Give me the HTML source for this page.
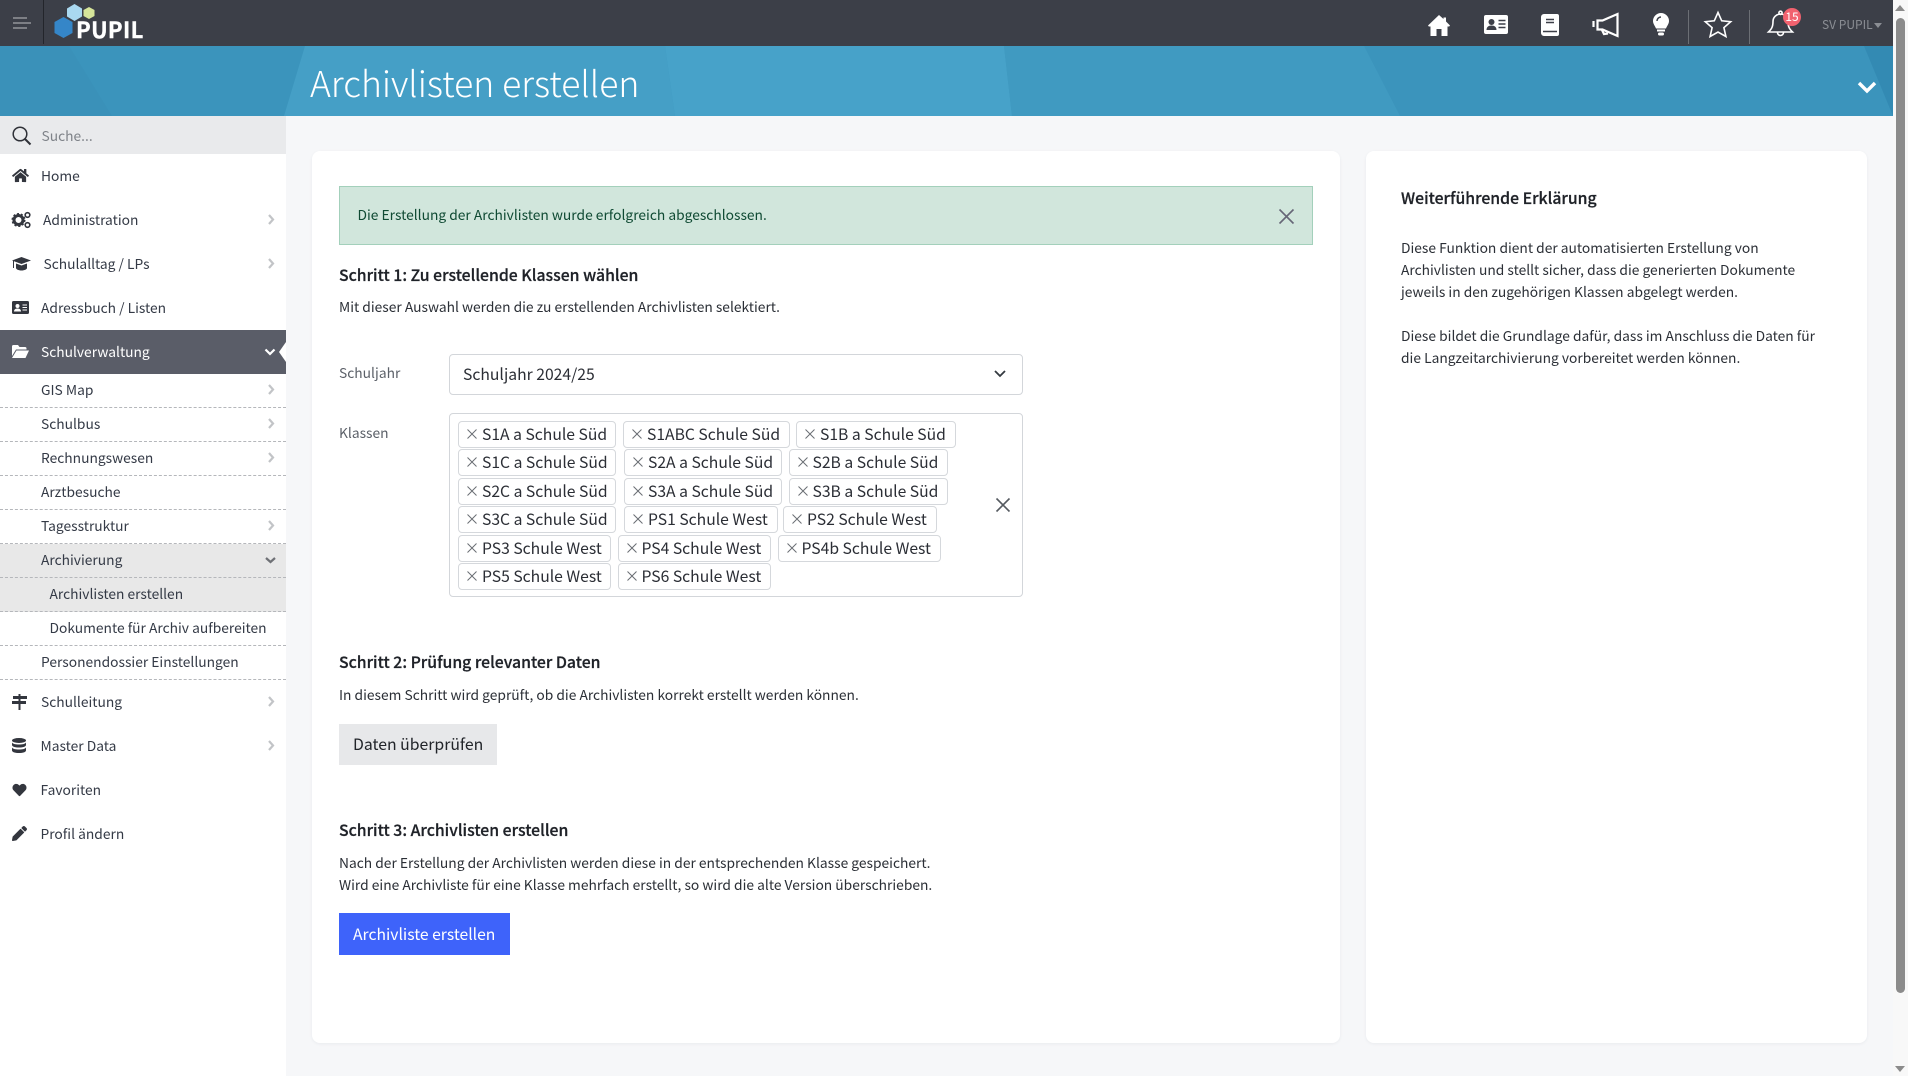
<!DOCTYPE html>
<html lang="de"><head><meta charset="utf-8"><title>Archivlisten erstellen</title>
<style>
html,body{margin:0;padding:0;width:1908px;height:1076px;overflow:hidden;background:#f6f7f9}
body{position:relative;font-family:"Noto Sans CJK JP","Liberation Sans",sans-serif;color:#2b2e35}
.a,.t,.b{position:absolute}
.t{white-space:nowrap;line-height:24px;height:24px}
svg{position:absolute;overflow:visible}
.n{font-size:13.8px;color:#343a46;margin-top:-1px}
.p{font-size:13.8px;color:#2b2f36;margin-top:-1px}
.h{font-size:15.8px;font-weight:500;color:#1f2228;-webkit-text-stroke:.25px #1f2228}
.tag{position:absolute;height:25px;border:1px solid #d5d8dc;border-radius:4px;background:#fff;box-sizing:content-box}
.tag span{position:absolute;left:23px;top:-1px;line-height:25px;font-size:15.7px;color:#2b2e35;white-space:nowrap}
.tag svg{left:8px;top:7px}
.dash{position:absolute;left:0;width:286px;height:0;border-top:1px dashed #b5b7bb}
.ch{position:absolute;left:267px}
</style></head><body>

<!-- top bar -->
<div class="a" style="left:0;top:0;width:1893px;height:46px;background:#3c3f48"></div>
<div class="a" style="left:43px;top:0;width:1px;height:44px;background:#23252b"></div>
<div class="a" style="left:13px;top:17px;width:14px;height:2px;background:#7d7f85"></div>
<div class="a" style="left:13px;top:22px;width:18px;height:2px;background:#7d7f85"></div>
<div class="a" style="left:13px;top:27px;width:14px;height:2px;background:#7d7f85"></div>
<svg style="left:54px;top:3px" width="44" height="36" viewBox="0 0 44 36"><polygon points="20.5,1 28,5.5 28,13.5 20.5,18 13,13.5 13,5.5" fill="#a9d8f0"/><polygon points="35,4 40.500,7 40.500,13 35,16 29.500,13 29.500,7" fill="#d6e59a"/><polygon points="9.500,14 18.500,19 18.500,30 9.500,35 0.500,30 0.500,19" fill="#3586c8"/></svg>
<div class="t" style="left:76px;top:17px;font-size:22px;font-weight:700;color:#fff;letter-spacing:.4px;line-height:24px;-webkit-text-stroke:.4px #fff">PUPIL</div>

<!-- top icons -->
<svg style="left:1428px;top:15px" width="22" height="21" viewBox="0 0 22 21" fill="#fff"><path d="M11 0l4.500 4V2.500h2.500v4L22 10.500l-.8 1H19.500V21H13.500v-7h-5v7H2.500V11.500H.8l-.8-1z"/></svg>
<svg style="left:1484px;top:15px" width="24" height="19" viewBox="0 0 24 19"><rect width="24" height="19" rx="2" fill="#fff"/><circle cx="7.500" cy="7" r="3" fill="#3c3f48"/><path d="M2.500 15c0-3 2-4.500 5-4.500s5 1.500 5 4.500z" fill="#3c3f48"/><path d="M14.500 5.500h7M14.500 9h7M14.500 12.500h7" stroke="#3c3f48" stroke-width="1.500"/></svg>
<svg style="left:1541px;top:14px" width="18" height="22" viewBox="0 0 18 22"><path d="M3 0h13a2 2 0 0 1 2 2v18a2 2 0 0 1-2 2H3a3 3 0 0 1-3-3V3a3 3 0 0 1 3-3z" fill="#fff"/><path d="M5 5.500h8M5 8.500h8M2 17.500h14" stroke="#3c3f48" stroke-width="1.600"/></svg>
<svg style="left:1592px;top:12px" width="28" height="26" viewBox="0 0 28 26" fill="none" stroke="#fff" stroke-width="2.200"><path d="M1.500 9v6"/><path d="M5.500 8.500h5L25.500 2v22L10.500 17.500h-5z"/><path d="M10 18l2 4 4-.5"/></svg>
<svg style="left:1653px;top:13px" width="16" height="23" viewBox="0 0 16 23"><path d="M8 0a8 8 0 0 1 8 8c0 3-2.200 5-3 7.500H3C2.200 13 0 11 0 8a8 8 0 0 1 8-8z" fill="#fff"/><path d="M4 8a4 4 0 0 1 4-4" stroke="#3c3f48" stroke-width="1.500" fill="none"/><rect x="4" y="16.500" width="8" height="2" fill="#fff"/><rect x="5" y="19.500" width="6" height="3" rx="1.500" fill="#fff"/></svg>
<div class="a" style="left:1688px;top:10px;width:1px;height:34px;background:#6c6f75"></div>
<svg style="left:1704px;top:11px" width="28" height="27" viewBox="0 0 28 27" fill="none" stroke="#fff" stroke-width="1.600"><path d="M14 1.500l3.700 8.300 9 .9-6.800 6 2 8.800L14 21l-7.900 4.500 2-8.800-6.800-6 9-.9z"/></svg>
<div class="a" style="left:1749px;top:10px;width:1px;height:34px;background:#6c6f75"></div>
<svg style="left:1767px;top:10px" width="27" height="27" viewBox="0 0 27 27" fill="none" stroke="#fff" stroke-width="1.600"><path d="M13.500 4a7.500 7.500 0 0 0-7.500 7.500c0 6-2 8-4.500 10.500h24c-2.500-2.500-4.500-4.500-4.500-10.500A7.500 7.500 0 0 0 13.500 4z"/><circle cx="13.500" cy="2.800" r="1.600"/><path d="M10.500 22.500a3 3 0 0 0 6 0"/></svg>
<div class="a" style="left:1783px;top:8px;width:18px;height:18px;border-radius:50%;background:#f1626f"></div>
<div class="t" style="left:1783px;top:5px;width:18px;text-align:center;font-size:12px;color:#fff">15</div>
<div class="t" style="left:1822px;top:13px;font-size:12px;color:#8b8e94">SV PUPIL</div>
<div class="a" style="left:1874px;top:23px;width:0;height:0;border:4px solid transparent;border-top:5px solid #8b8e94"></div>

<!-- banner -->
<svg style="left:0;top:46px" width="1893" height="70" viewBox="0 0 1893 70" preserveAspectRatio="none">
<rect width="1893" height="70" fill="#3b94bc"/>
<polygon points="0,0 69,0 112,70 0,70" fill="#3a91b9"/>
<polygon points="305,0 665,0 675,70 284,70" fill="#459fc6"/>
<polygon points="665,0 1004,0 1012,70 675,70" fill="#47a2c9"/>
<polygon points="1004,0 1364,0 1400,70 1012,70" fill="#409ac1"/>
<polygon points="1864,0 1893,0 1893,70" fill="#338ab3"/>
</svg>
<div class="t" style="left:310px;top:56px;height:54px;line-height:54px;font-size:35.5px;font-weight:300;color:#fff">Archivlisten erstellen</div>
<svg style="left:1857px;top:81px" width="20" height="13" viewBox="0 0 20 13" fill="none" stroke="#fff" stroke-width="3.400"><path d="M2 2l8 8 8-8"/></svg>

<!-- sidebar -->
<div class="a" style="left:0;top:116px;width:286px;height:960px;background:#fff"></div>
<div class="a" style="left:0;top:116px;width:286px;height:38px;background:#e9eaec"></div>
<svg style="left:12px;top:126px" width="20" height="20" viewBox="0 0 20 20" fill="none" stroke="#2f3138" stroke-width="1.500"><circle cx="8" cy="8" r="6.800"/><path d="M13 13l5.500 5.500" stroke-width="2"/></svg>
<div class="t" style="left:41.500px;top:123px;font-size:13.8px;color:#7f8389">Suche...</div>

<svg style="left:12px;top:168px" width="17" height="15" viewBox="0 0 576 512" fill="#33363e"><path d="M280.370 148.260L96 300.110V464a16 16 0 0 0 16 16l112.060-.29a16 16 0 0 0 15.920-16V368a16 16 0 0 1 16-16h64a16 16 0 0 1 16 16v95.640a16 16 0 0 0 16 16.050L464 480a16 16 0 0 0 16-16V300L295.670 148.260a12.190 12.190 0 0 0-15.300 0zM571.600 251.470L488 182.560V44.050a12 12 0 0 0-12-12h-56a12 12 0 0 0-12 12v72.610L318.470 43a48 48 0 0 0-61 0L4.340 251.470a12 12 0 0 0-1.600 16.900l25.500 31A12 12 0 0 0 45.150 301l235.220-193.740a12.190 12.190 0 0 1 15.300 0L530.900 301a12 12 0 0 0 16.900-1.600l25.500-31a12 12 0 0 0-1.700-16.930z"/></svg>
<div class="t n" style="left:41px;top:164px">Home</div>

<svg style="left:12px;top:212px" width="19" height="16" viewBox="0 0 19 16"><circle cx="6.500" cy="8" r="4.500" fill="none" stroke="#33363e" stroke-width="3"/><circle cx="6.500" cy="8" r="6" fill="none" stroke="#33363e" stroke-width="2" stroke-dasharray="2 1.800"/><circle cx="15.500" cy="3" r="2.300" fill="none" stroke="#33363e" stroke-width="1.600"/><circle cx="15.500" cy="13" r="2.300" fill="none" stroke="#33363e" stroke-width="1.600"/></svg>
<div class="t n" style="left:43px;top:208px">Administration</div>

<svg style="left:12px;top:257px" width="19" height="14" viewBox="0 0 19 14" fill="#33363e"><path d="M9.500 0L19 3.500 9.500 7 0 3.500z"/><path d="M4 6.500l5.500 2 5.500-2V11c0 1.200-2.500 2.500-5.500 2.500S4 12.200 4 11z"/><rect x="1" y="4" width="1" height="7"/></svg>
<div class="t n" style="left:43.500px;top:252px">Schulalltag / LPs</div>

<svg style="left:12px;top:301px" width="17" height="13" viewBox="0 0 17 13"><rect width="17" height="13" rx="1.500" fill="#33363e"/><circle cx="5.500" cy="5" r="2" fill="#fff"/><path d="M2 10.500c0-2 1.500-3 3.500-3s3.500 1 3.500 3z" fill="#fff"/><path d="M10.500 4h4.500M10.500 6.500h4.500M10.500 9h4.500" stroke="#fff" stroke-width="1"/></svg>
<div class="t n" style="left:41px;top:296px">Adressbuch / Listen</div>

<div class="a" style="left:0;top:330px;width:286px;height:44px;background:#5a5d68"></div>
<svg style="left:12px;top:345px" width="17" height="13" viewBox="0 0 17 13" fill="#fff"><path d="M0 1.500A1.500 1.500 0 0 1 1.500 0H6l1.500 2H13a1.500 1.500 0 0 1 1.500 1.500V4.500H4L0 11z"/><path d="M4.500 5.500H17L13.500 13H0z"/></svg>
<div class="t n" style="left:41px;top:340px;color:#fff">Schulverwaltung</div>
<svg style="left:264px;top:348px" width="12" height="8" viewBox="0 0 12 8" fill="none" stroke="#fff" stroke-width="2.200"><path d="M1.500 1.500L6 6l4.500-4.500"/></svg>
<svg style="left:279px;top:342px" width="7" height="20" viewBox="0 0 7 20"><polygon points="7,0 0,10 7,20" fill="#fff"/></svg>

<div class="a" style="left:0;top:544px;width:286px;height:68px;background:#e8e8e8"></div>
<div class="dash" style="top:407px"></div><div class="dash" style="top:441px"></div><div class="dash" style="top:475px"></div><div class="dash" style="top:509px"></div><div class="dash" style="top:543px"></div><div class="dash" style="top:577px"></div><div class="dash" style="top:611px"></div><div class="dash" style="top:645px"></div><div class="dash" style="top:679px"></div>
<div class="t n" style="left:41px;top:378px">GIS Map</div>
<div class="t n" style="left:41px;top:412px">Schulbus</div>
<div class="t n" style="left:41px;top:446px">Rechnungswesen</div>
<div class="t n" style="left:41px;top:480px">Arztbesuche</div>
<div class="t n" style="left:41px;top:514px">Tagesstruktur</div>
<div class="t n" style="left:41px;top:548px">Archivierung</div>
<div class="t n" style="left:49.500px;top:582px">Archivlisten erstellen</div>
<div class="t n" style="left:49.500px;top:616px">Dokumente für Archiv aufbereiten</div>
<div class="t n" style="left:41px;top:650px">Personendossier Einstellungen</div>

<svg style="left:12px;top:694px" width="15" height="16" viewBox="0 0 15 16" fill="#33363e"><rect x="6.500" y="0" width="2" height="16"/><polygon points="1,2 15,2 15,5 1,5"/><polygon points="0,7 14,7 14,10 0,10"/></svg>
<div class="t n" style="left:41px;top:690px">Schulleitung</div>
<svg style="left:12px;top:738px" width="14" height="15" viewBox="0 0 14 15" fill="#33363e"><ellipse cx="7" cy="2.500" rx="7" ry="2.500"/><path d="M0 4.500c1 1.500 3.500 2 7 2s6-.5 7-2V7c0 1.500-3 2.500-7 2.500S0 8.500 0 7z"/><path d="M0 9.500c1 1.500 3.500 2 7 2s6-.5 7-2v3c0 1.500-3 2.500-7 2.500S0 14 0 12.500z"/></svg>
<div class="t n" style="left:40.500px;top:734px">Master Data</div>
<svg style="left:12px;top:783px" width="15" height="14" viewBox="0 0 512 512" fill="#33363e"><path d="M462.300 62.600C407.500 15.900 326 24.300 275.700 76.200L256 96.500l-19.700-20.300C186.100 24.300 104.500 15.900 49.700 62.600c-62.800 53.600-66.100 149.800-9.900 207.900l193.500 199.800c12.500 12.900 32.800 12.900 45.300 0l193.500-199.800c56.300-58.100 53-154.300-9.800-207.900z"/></svg>
<div class="t n" style="left:40.500px;top:778px">Favoriten</div>
<svg style="left:12px;top:826px" width="15" height="15" viewBox="0 0 512 512" fill="#33363e"><path d="M497.900 142.100l-46.100 46.100c-4.700 4.700-12.300 4.700-17 0l-111-111c-4.700-4.700-4.700-12.300 0-17l46.100-46.100c18.700-18.700 49.100-18.700 67.900 0l60.100 60.100c18.800 18.700 18.800 49.100 0 67.900zM284.200 99.800L21.600 362.400.4 483.900c-2.900 16.400 11.400 30.600 27.800 27.800l121.500-21.300 262.600-262.600c4.700-4.700 4.700-12.300 0-17l-111-111c-4.800-4.700-12.400-4.700-17.100 0z"/></svg>
<div class="t n" style="left:40.500px;top:822px">Profil ändern</div>

<svg style="left:0;top:0" width="286" height="1076" fill="none" stroke="#c2c4c7" stroke-width="2.200"><path d="M269 215l4 4.500-4 4.500M269 259l4 4.500-4 4.500M269 385l4 4.500-4 4.500M269 419l4 4.500-4 4.500M269 453l4 4.500-4 4.500M269 521l4 4.500-4 4.500M269 697l4 4.500-4 4.500M269 741l4 4.500-4 4.500"/><path d="M266 558l4.500 4 4.500-4" stroke="#6f7176"/></svg>

<!-- left card -->
<div class="a" style="left:312px;top:151px;width:1028px;height:892px;background:#fff;border-radius:8px;box-shadow:0 1px 3px rgba(40,50,70,.06)"></div>
<div class="a" style="left:339px;top:186px;width:974px;height:59px;box-sizing:border-box;background:#d1e6dc;border:1px solid #a3d0bb"></div>
<div class="t" style="left:357.500px;top:202px;font-size:13.8px;color:#0f4a33">Die Erstellung der Archivlisten wurde erfolgreich abgeschlossen.</div>
<svg style="left:1279px;top:209px" width="15" height="15" viewBox="0 0 15 15" stroke="#667" stroke-width="1.600"><path d="M.5.500l14 14M14.500.500l-14 14"/></svg>

<div class="t h" style="left:339px;top:262.500px">Schritt 1: Zu erstellende Klassen wählen</div>
<div class="t p" style="left:339px;top:295px">Mit dieser Auswahl werden die zu erstellenden Archivlisten selektiert.</div>

<div class="t p" style="left:339px;top:361px;color:#5b6068">Schuljahr</div>
<div class="a" style="left:449px;top:354px;width:574px;height:41px;box-sizing:border-box;border:1px solid #d3d6da;border-radius:4px;background:#fff"></div>
<div class="t" style="left:463px;top:362px;font-size:15.7px;color:#2b2e35">Schuljahr 2024/25</div>
<svg style="left:994px;top:370px" width="12" height="8" viewBox="0 0 12 8" fill="none" stroke="#343a40" stroke-width="1.800"><path d="M1 1l5 5 5-5"/></svg>

<div class="t p" style="left:339px;top:421px;color:#5b6068">Klassen</div>
<div class="a" style="left:449px;top:413px;width:574px;height:184px;box-sizing:border-box;border:1px solid #d3d6da;border-radius:4px;background:#fff"></div>
<svg style="left:996px;top:498px" width="14" height="14" viewBox="0 0 14 14" stroke="#555a60" stroke-width="1.600"><path d="M.5.500l13 13M13.500.500l-13 13"/></svg>

<div class="tag" style="left:458px;top:421px;width:156px"><svg width="10" height="10" viewBox="0 0 10 10" stroke="#6a6e74"><path d="M.5.500l9 9M9.500.500l-9 9"/></svg><span>S1A a Schule Süd</span></div>
<div class="tag" style="left:623px;top:421px;width:165px"><svg width="10" height="10" viewBox="0 0 10 10" stroke="#6a6e74"><path d="M.5.500l9 9M9.500.500l-9 9"/></svg><span>S1ABC Schule Süd</span></div>
<div class="tag" style="left:796px;top:421px;width:158px"><svg width="10" height="10" viewBox="0 0 10 10" stroke="#6a6e74"><path d="M.5.500l9 9M9.500.500l-9 9"/></svg><span>S1B a Schule Süd</span></div>
<div class="tag" style="left:458px;top:449px;width:156px"><svg width="10" height="10" viewBox="0 0 10 10" stroke="#6a6e74"><path d="M.5.500l9 9M9.500.500l-9 9"/></svg><span>S1C a Schule Süd</span></div>
<div class="tag" style="left:624px;top:449px;width:156px"><svg width="10" height="10" viewBox="0 0 10 10" stroke="#6a6e74"><path d="M.5.500l9 9M9.500.500l-9 9"/></svg><span>S2A a Schule Süd</span></div>
<div class="tag" style="left:788.500px;top:449px;width:157px"><svg width="10" height="10" viewBox="0 0 10 10" stroke="#6a6e74"><path d="M.5.500l9 9M9.500.500l-9 9"/></svg><span>S2B a Schule Süd</span></div>
<div class="tag" style="left:458px;top:478px;width:156px"><svg width="10" height="10" viewBox="0 0 10 10" stroke="#6a6e74"><path d="M.5.500l9 9M9.500.500l-9 9"/></svg><span>S2C a Schule Süd</span></div>
<div class="tag" style="left:624px;top:478px;width:156px"><svg width="10" height="10" viewBox="0 0 10 10" stroke="#6a6e74"><path d="M.5.500l9 9M9.500.500l-9 9"/></svg><span>S3A a Schule Süd</span></div>
<div class="tag" style="left:788.500px;top:478px;width:157px"><svg width="10" height="10" viewBox="0 0 10 10" stroke="#6a6e74"><path d="M.5.500l9 9M9.500.500l-9 9"/></svg><span>S3B a Schule Süd</span></div>
<div class="tag" style="left:458px;top:506px;width:156px"><svg width="10" height="10" viewBox="0 0 10 10" stroke="#6a6e74"><path d="M.5.500l9 9M9.500.500l-9 9"/></svg><span>S3C a Schule Süd</span></div>
<div class="tag" style="left:624px;top:506px;width:152px"><svg width="10" height="10" viewBox="0 0 10 10" stroke="#6a6e74"><path d="M.5.500l9 9M9.500.500l-9 9"/></svg><span>PS1 Schule West</span></div>
<div class="tag" style="left:783px;top:506px;width:152px"><svg width="10" height="10" viewBox="0 0 10 10" stroke="#6a6e74"><path d="M.5.500l9 9M9.500.500l-9 9"/></svg><span>PS2 Schule West</span></div>
<div class="tag" style="left:458px;top:535px;width:151px"><svg width="10" height="10" viewBox="0 0 10 10" stroke="#6a6e74"><path d="M.5.500l9 9M9.500.500l-9 9"/></svg><span>PS3 Schule West</span></div>
<div class="tag" style="left:617.500px;top:535px;width:151.500px"><svg width="10" height="10" viewBox="0 0 10 10" stroke="#6a6e74"><path d="M.5.500l9 9M9.500.500l-9 9"/></svg><span>PS4 Schule West</span></div>
<div class="tag" style="left:777.500px;top:535px;width:161.500px"><svg width="10" height="10" viewBox="0 0 10 10" stroke="#6a6e74"><path d="M.5.500l9 9M9.500.500l-9 9"/></svg><span>PS4b Schule West</span></div>
<div class="tag" style="left:458px;top:563px;width:151px"><svg width="10" height="10" viewBox="0 0 10 10" stroke="#6a6e74"><path d="M.5.500l9 9M9.500.500l-9 9"/></svg><span>PS5 Schule West</span></div>
<div class="tag" style="left:617.500px;top:563px;width:151.500px"><svg width="10" height="10" viewBox="0 0 10 10" stroke="#6a6e74"><path d="M.5.500l9 9M9.500.500l-9 9"/></svg><span>PS6 Schule West</span></div>

<div class="t h" style="left:339px;top:650px">Schritt 2: Prüfung relevanter Daten</div>
<div class="t p" style="left:339px;top:683px">In diesem Schritt wird geprüft, ob die Archivlisten korrekt erstellt werden können.</div>
<div class="a" style="left:339px;top:724px;width:158px;height:41px;background:#e7e8ea"></div>
<div class="t" style="left:353px;top:731.500px;font-size:15.8px;color:#212429">Daten überprüfen</div>

<div class="t h" style="left:339px;top:818px">Schritt 3: Archivlisten erstellen</div>
<div class="t p" style="left:339px;top:851px">Nach der Erstellung der Archivlisten werden diese in der entsprechenden Klasse gespeichert.</div>
<div class="t p" style="left:339px;top:873px">Wird eine Archivliste für eine Klasse mehrfach erstellt, so wird die alte Version überschrieben.</div>
<div class="a" style="left:339px;top:913px;width:171px;height:42px;background:#3e63fa"></div>
<div class="t" style="left:353px;top:922px;font-size:15.7px;color:#fff">Archivliste erstellen</div>

<!-- right card -->
<div class="a" style="left:1366px;top:151px;width:501px;height:892px;background:#fff;border-radius:8px;box-shadow:0 1px 3px rgba(40,50,70,.06)"></div>
<div class="t h" style="left:1401px;top:186px">Weiterführende Erklärung</div>
<div class="t p" style="left:1401px;top:236px">Diese Funktion dient der automatisierten Erstellung von</div>
<div class="t p" style="left:1401px;top:258px">Archivlisten und stellt sicher, dass die generierten Dokumente</div>
<div class="t p" style="left:1401px;top:280px">jeweils in den zugehörigen Klassen abgelegt werden.</div>
<div class="t p" style="left:1401px;top:324px">Diese bildet die Grundlage dafür, dass im Anschluss die Daten für</div>
<div class="t p" style="left:1401px;top:346px">die Langzeitarchivierung vorbereitet werden können.</div>

<!-- scrollbar -->
<div class="a" style="left:1893px;top:0;width:15px;height:1076px;background:#f8f8f8"></div>
<div class="a" style="left:1896px;top:18px;width:9px;height:975px;background:#8b8b8b;border-radius:5px"></div>
<div class="a" style="left:1895px;top:5px;width:0;height:0;border-left:5px solid transparent;border-right:5px solid transparent;border-bottom:6px solid #8b8b8b"></div>
<div class="a" style="left:1895px;top:1066px;width:0;height:0;border-left:5px solid transparent;border-right:5px solid transparent;border-top:6px solid #8b8b8b"></div>
</body></html>
